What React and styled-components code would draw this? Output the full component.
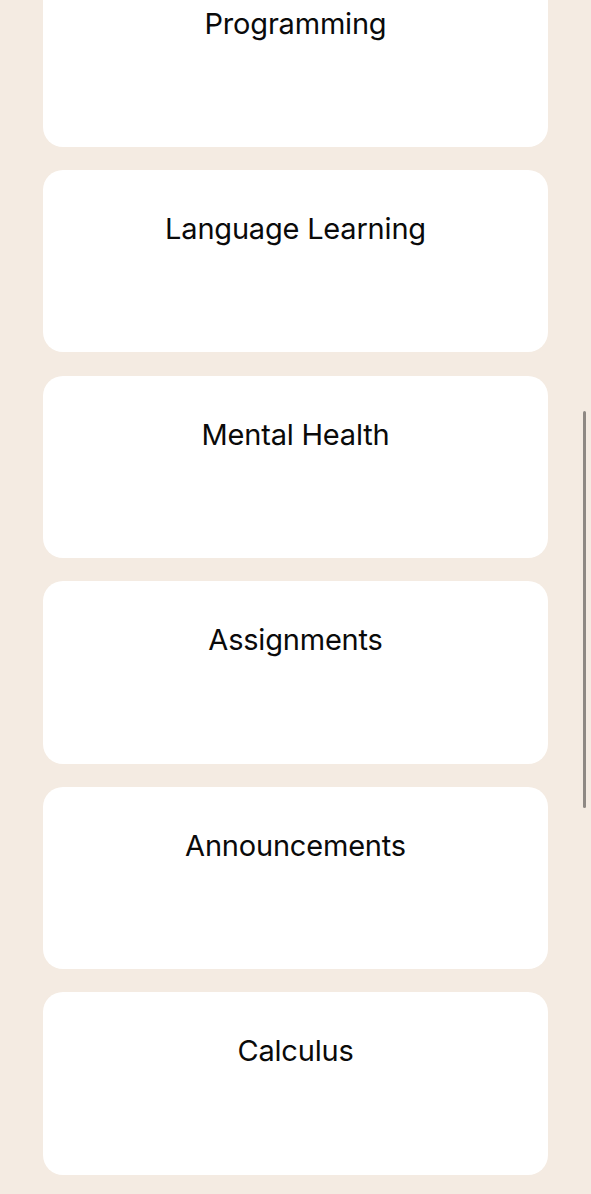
import React from "react";
import styled, { createGlobalStyle } from "styled-components";

const topics = [
  "Programming",
  "Language Learning",
  "Mental Health",
  "Assignments",
  "Announcements",
  "Calculus",
];

function App() {
  return (
    <>
      <GlobalStyle />
      <Page>
        <List>
          {topics.map((name) => (
            <Card key={name}>
              <Title>{name}</Title>
            </Card>
          ))}
        </List>
      </Page>
      <ScrollThumb />
    </>
  );
}

export default App;

const GlobalStyle = createGlobalStyle`
  html, body {
    margin: 0;
    padding: 0;
    background: #f4ebe2;
    overflow: hidden;
  }
  body {
    font-family: Inter, "Noto Sans", "Liberation Sans", sans-serif;
  }
`;

const Page = styled.div`
  height: 1194px;
  overflow: hidden;
  padding: 0 43px;
`;

const List = styled.div`
  display: flex;
  flex-direction: column;
  gap: 23.2px;
  margin-top: -35.5px;
`;

const Card = styled.div`
  height: 182.4px;
  background: #ffffff;
  border-radius: 20px;
  display: flex;
  justify-content: center;
  align-items: flex-start;
  padding-top: 41px;
  box-sizing: border-box;
`;

const Title = styled.div`
  font-size: 29px;
  line-height: 35px;
  color: #0a0a0a;
  letter-spacing: -0.2px;
`;

const ScrollThumb = styled.div`
  position: fixed;
  right: 5px;
  top: 411px;
  width: 3px;
  height: 397px;
  border-radius: 2px;
  background: #8f8984;
`;
